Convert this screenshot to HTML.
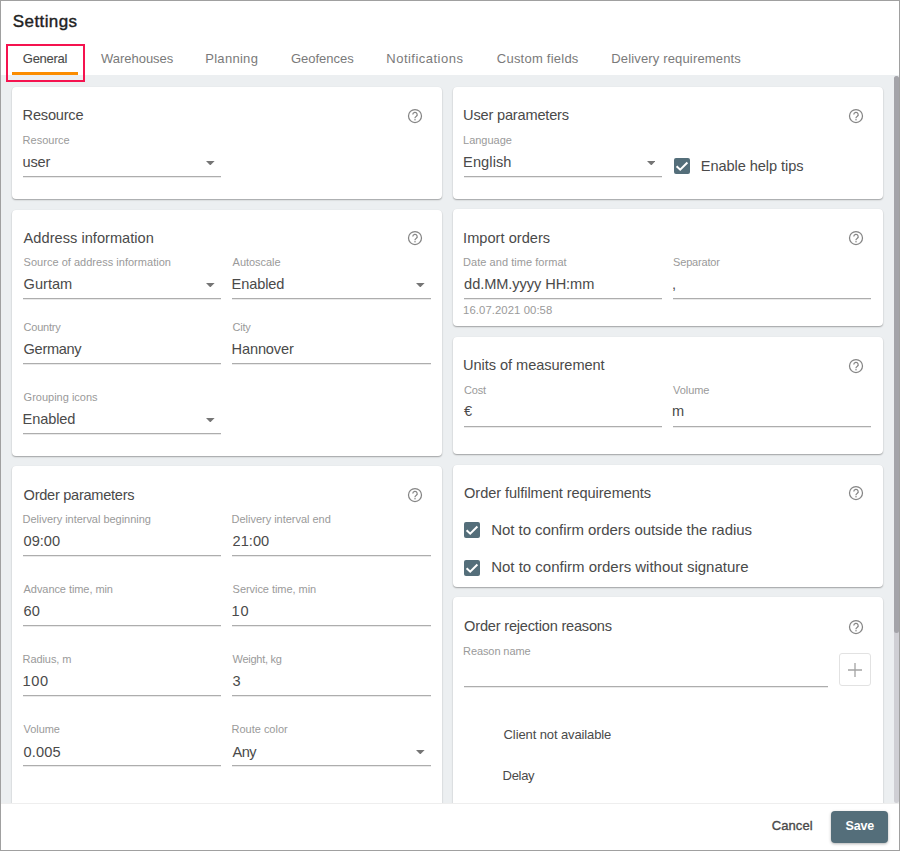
<!DOCTYPE html>
<html><head><meta charset="utf-8"><style>
html,body{margin:0;padding:0;}
body{width:900px;height:851px;position:relative;overflow:hidden;background:#fff;font-family:"Liberation Sans", sans-serif;}
.t{position:absolute;white-space:nowrap;}
#frame{position:absolute;left:0;top:0;width:900px;height:851px;box-sizing:border-box;border:1px solid #a0a0a0;pointer-events:none;z-index:10;}
</style></head><body>
<div class="t" style="left:12.8px;top:13.21px;font-size:17px;line-height:17px;color:#222222;font-weight:400;letter-spacing:0.400px;-webkit-text-stroke:0.4px #222222;">Settings</div>
<div class="t" style="left:22.8px;top:51.80px;font-size:13px;line-height:13px;color:#4a4a4a;font-weight:400;letter-spacing:-0.267px;-webkit-text-stroke:0.1px #4a4a4a;">General</div>
<div class="t" style="left:101.0px;top:51.80px;font-size:13px;line-height:13px;color:#7a7a7a;font-weight:400;letter-spacing:-0.022px;">Warehouses</div>
<div class="t" style="left:205.2px;top:51.80px;font-size:13px;line-height:13px;color:#7a7a7a;font-weight:400;letter-spacing:0.300px;">Planning</div>
<div class="t" style="left:290.9px;top:51.80px;font-size:13px;line-height:13px;color:#7a7a7a;font-weight:400;">Geofences</div>
<div class="t" style="left:386.3px;top:51.80px;font-size:13px;line-height:13px;color:#7a7a7a;font-weight:400;letter-spacing:0.483px;">Notifications</div>
<div class="t" style="left:496.8px;top:51.80px;font-size:13px;line-height:13px;color:#7a7a7a;font-weight:400;letter-spacing:0.233px;">Custom fields</div>
<div class="t" style="left:611.2px;top:51.80px;font-size:13px;line-height:13px;color:#7a7a7a;font-weight:400;letter-spacing:0.160px;">Delivery requirements</div>
<div style="position:absolute;left:1px;top:75px;width:898px;height:728px;background:#eceff1;"></div>
<div style="position:absolute;left:12px;top:72px;width:66px;height:3px;background:#fb8c00;"></div>
<div style="position:absolute;left:6px;top:44px;width:75px;height:34px;border:2px solid #f5134f;"></div>
<div style="position:absolute;left:894px;top:76px;width:5px;height:727px;background:#cfcfd4;border-radius:3px;"></div>
<div style="position:absolute;left:894px;top:76px;width:5px;height:557px;background:#a4a4a9;border-radius:3px;"></div>
<div style="position:absolute;left:12px;top:87px;width:430px;height:112px;background:#fff;border-radius:4px;box-shadow:0 1px 1.5px rgba(0,0,0,0.32),0 0 1px rgba(0,0,0,0.05);"></div>
<div class="t" style="left:22.6px;top:108.14px;font-size:14.6px;line-height:14.6px;color:#4a4a4a;font-weight:400;letter-spacing:-0.214px;">Resource</div>
<svg style="position:absolute;left:405.30px;top:106.25px" width="20" height="20" viewBox="0 0 20 20"><circle cx="10" cy="10" r="6.5" fill="none" stroke="#858585" stroke-width="1.25"/><path d="M7.8 8.6a2.2 2.2 0 1 1 3.3 1.9c-.7.4-1.1.8-1.1 1.6v.2" fill="none" stroke="#858585" stroke-width="1.25"/><circle cx="10" cy="13.7" r="0.75" fill="#858585"/></svg>
<div class="t" style="left:22.6px;top:134.89px;font-size:11px;line-height:11px;color:#9a9a9a;font-weight:400;">Resource</div>
<div class="t" style="left:22.6px;top:154.94px;font-size:14.6px;line-height:14.6px;color:#4a4a4a;font-weight:400;letter-spacing:-0.233px;">user</div>
<div style="position:absolute;left:23px;top:176px;width:198px;height:1px;background:#adadad;box-shadow:0 1px 0 #eaeaea;"></div>
<svg style="position:absolute;left:206px;top:161px" width="8.6" height="4.4" viewBox="0 0 10 5" preserveAspectRatio="none"><path fill="#757575" d="M0 0h10L5 5z"/></svg>
<div style="position:absolute;left:12px;top:210px;width:430px;height:246px;background:#fff;border-radius:4px;box-shadow:0 1px 1.5px rgba(0,0,0,0.32),0 0 1px rgba(0,0,0,0.05);"></div>
<div class="t" style="left:23.6px;top:231.14px;font-size:14.6px;line-height:14.6px;color:#4a4a4a;font-weight:400;letter-spacing:0.028px;">Address information</div>
<svg style="position:absolute;left:405.30px;top:228.35px" width="20" height="20" viewBox="0 0 20 20"><circle cx="10" cy="10" r="6.5" fill="none" stroke="#858585" stroke-width="1.25"/><path d="M7.8 8.6a2.2 2.2 0 1 1 3.3 1.9c-.7.4-1.1.8-1.1 1.6v.2" fill="none" stroke="#858585" stroke-width="1.25"/><circle cx="10" cy="13.7" r="0.75" fill="#858585"/></svg>
<div class="t" style="left:23.6px;top:257.29px;font-size:11px;line-height:11px;color:#9a9a9a;font-weight:400;letter-spacing:0.021px;">Source of address information</div>
<div class="t" style="left:23.6px;top:277.24px;font-size:14.6px;line-height:14.6px;color:#4a4a4a;font-weight:400;">Gurtam</div>
<div style="position:absolute;left:23px;top:298px;width:198px;height:1px;background:#adadad;box-shadow:0 1px 0 #eaeaea;"></div>
<svg style="position:absolute;left:206px;top:283px" width="8.6" height="4.4" viewBox="0 0 10 5" preserveAspectRatio="none"><path fill="#757575" d="M0 0h10L5 5z"/></svg>
<div class="t" style="left:232.6px;top:257.29px;font-size:11px;line-height:11px;color:#9a9a9a;font-weight:400;letter-spacing:-0.037px;">Autoscale</div>
<div class="t" style="left:231.6px;top:277.24px;font-size:14.6px;line-height:14.6px;color:#4a4a4a;font-weight:400;letter-spacing:-0.133px;">Enabled</div>
<div style="position:absolute;left:232px;top:298px;width:199px;height:1px;background:#adadad;box-shadow:0 1px 0 #eaeaea;"></div>
<svg style="position:absolute;left:416px;top:283px" width="8.6" height="4.4" viewBox="0 0 10 5" preserveAspectRatio="none"><path fill="#757575" d="M0 0h10L5 5z"/></svg>
<div class="t" style="left:23.6px;top:322.09px;font-size:11px;line-height:11px;color:#9a9a9a;font-weight:400;letter-spacing:-0.217px;">Country</div>
<div class="t" style="left:23.6px;top:341.94px;font-size:14.6px;line-height:14.6px;color:#4a4a4a;font-weight:400;letter-spacing:-0.333px;">Germany</div>
<div style="position:absolute;left:23px;top:363px;width:198px;height:1px;background:#adadad;box-shadow:0 1px 0 #eaeaea;"></div>
<div class="t" style="left:232.6px;top:322.09px;font-size:11px;line-height:11px;color:#9a9a9a;font-weight:400;letter-spacing:-0.267px;">City</div>
<div class="t" style="left:231.6px;top:341.94px;font-size:14.6px;line-height:14.6px;color:#4a4a4a;font-weight:400;letter-spacing:-0.157px;">Hannover</div>
<div style="position:absolute;left:232px;top:363px;width:199px;height:1px;background:#adadad;box-shadow:0 1px 0 #eaeaea;"></div>
<div class="t" style="left:23.6px;top:392.39px;font-size:11px;line-height:11px;color:#9a9a9a;font-weight:400;">Grouping icons</div>
<div class="t" style="left:22.6px;top:411.54px;font-size:14.6px;line-height:14.6px;color:#4a4a4a;font-weight:400;letter-spacing:-0.133px;">Enabled</div>
<div style="position:absolute;left:23px;top:433px;width:198px;height:1px;background:#adadad;box-shadow:0 1px 0 #eaeaea;"></div>
<svg style="position:absolute;left:206px;top:418px" width="8.6" height="4.4" viewBox="0 0 10 5" preserveAspectRatio="none"><path fill="#757575" d="M0 0h10L5 5z"/></svg>
<div style="position:absolute;left:12px;top:466px;width:430px;height:400px;background:#fff;border-radius:4px;box-shadow:0 1px 1.5px rgba(0,0,0,0.32),0 0 1px rgba(0,0,0,0.05);"></div>
<div class="t" style="left:23.6px;top:487.94px;font-size:14.6px;line-height:14.6px;color:#4a4a4a;font-weight:400;letter-spacing:-0.280px;">Order parameters</div>
<svg style="position:absolute;left:405.30px;top:485.35px" width="20" height="20" viewBox="0 0 20 20"><circle cx="10" cy="10" r="6.5" fill="none" stroke="#858585" stroke-width="1.25"/><path d="M7.8 8.6a2.2 2.2 0 1 1 3.3 1.9c-.7.4-1.1.8-1.1 1.6v.2" fill="none" stroke="#858585" stroke-width="1.25"/><circle cx="10" cy="13.7" r="0.75" fill="#858585"/></svg>
<div class="t" style="left:22.6px;top:514.09px;font-size:11px;line-height:11px;color:#9a9a9a;font-weight:400;letter-spacing:-0.027px;">Delivery interval beginning</div>
<div class="t" style="left:23.6px;top:533.64px;font-size:14.6px;line-height:14.6px;color:#4a4a4a;font-weight:400;letter-spacing:-0.025px;">09:00</div>
<div style="position:absolute;left:23px;top:555px;width:198px;height:1px;background:#adadad;box-shadow:0 1px 0 #eaeaea;"></div>
<div class="t" style="left:231.6px;top:514.09px;font-size:11px;line-height:11px;color:#9a9a9a;font-weight:400;letter-spacing:-0.025px;">Delivery interval end</div>
<div class="t" style="left:232.6px;top:533.64px;font-size:14.6px;line-height:14.6px;color:#4a4a4a;font-weight:400;">21:00</div>
<div style="position:absolute;left:232px;top:555px;width:199px;height:1px;background:#adadad;box-shadow:0 1px 0 #eaeaea;"></div>
<div class="t" style="left:23.6px;top:584.19px;font-size:11px;line-height:11px;color:#9a9a9a;font-weight:400;letter-spacing:-0.069px;">Advance time, min</div>
<div class="t" style="left:23.6px;top:604.14px;font-size:14.6px;line-height:14.6px;color:#4a4a4a;font-weight:400;">60</div>
<div style="position:absolute;left:23px;top:625px;width:198px;height:1px;background:#adadad;box-shadow:0 1px 0 #eaeaea;"></div>
<div class="t" style="left:232.6px;top:584.19px;font-size:11px;line-height:11px;color:#9a9a9a;font-weight:400;letter-spacing:-0.050px;">Service time, min</div>
<div class="t" style="left:231.6px;top:604.14px;font-size:14.6px;line-height:14.6px;color:#4a4a4a;font-weight:400;letter-spacing:0.700px;">10</div>
<div style="position:absolute;left:232px;top:625px;width:199px;height:1px;background:#adadad;box-shadow:0 1px 0 #eaeaea;"></div>
<div class="t" style="left:22.6px;top:654.49px;font-size:11px;line-height:11px;color:#9a9a9a;font-weight:400;letter-spacing:-0.088px;">Radius, m</div>
<div class="t" style="left:22.6px;top:674.44px;font-size:14.6px;line-height:14.6px;color:#4a4a4a;font-weight:400;letter-spacing:0.600px;">100</div>
<div style="position:absolute;left:23px;top:695px;width:198px;height:1px;background:#adadad;box-shadow:0 1px 0 #eaeaea;"></div>
<div class="t" style="left:232.6px;top:654.49px;font-size:11px;line-height:11px;color:#9a9a9a;font-weight:400;letter-spacing:-0.278px;">Weight, kg</div>
<div class="t" style="left:232.6px;top:674.44px;font-size:14.6px;line-height:14.6px;color:#4a4a4a;font-weight:400;">3</div>
<div style="position:absolute;left:232px;top:695px;width:199px;height:1px;background:#adadad;box-shadow:0 1px 0 #eaeaea;"></div>
<div class="t" style="left:23.6px;top:724.49px;font-size:11px;line-height:11px;color:#9a9a9a;font-weight:400;letter-spacing:-0.080px;">Volume</div>
<div class="t" style="left:23.6px;top:744.64px;font-size:14.6px;line-height:14.6px;color:#4a4a4a;font-weight:400;letter-spacing:0.150px;">0.005</div>
<div style="position:absolute;left:23px;top:765px;width:198px;height:1px;background:#adadad;box-shadow:0 1px 0 #eaeaea;"></div>
<div class="t" style="left:231.6px;top:724.49px;font-size:11px;line-height:11px;color:#9a9a9a;font-weight:400;letter-spacing:-0.020px;">Route color</div>
<div class="t" style="left:232.6px;top:744.64px;font-size:14.6px;line-height:14.6px;color:#4a4a4a;font-weight:400;letter-spacing:-0.600px;">Any</div>
<div style="position:absolute;left:232px;top:765px;width:199px;height:1px;background:#adadad;box-shadow:0 1px 0 #eaeaea;"></div>
<svg style="position:absolute;left:416px;top:750px" width="8.6" height="4.4" viewBox="0 0 10 5" preserveAspectRatio="none"><path fill="#757575" d="M0 0h10L5 5z"/></svg>
<div style="position:absolute;left:453px;top:87px;width:430px;height:112px;background:#fff;border-radius:4px;box-shadow:0 1px 1.5px rgba(0,0,0,0.32),0 0 1px rgba(0,0,0,0.05);"></div>
<div class="t" style="left:463.1px;top:108.34px;font-size:14.6px;line-height:14.6px;color:#4a4a4a;font-weight:400;letter-spacing:-0.193px;">User parameters</div>
<svg style="position:absolute;left:846.30px;top:106.25px" width="20" height="20" viewBox="0 0 20 20"><circle cx="10" cy="10" r="6.5" fill="none" stroke="#858585" stroke-width="1.25"/><path d="M7.8 8.6a2.2 2.2 0 1 1 3.3 1.9c-.7.4-1.1.8-1.1 1.6v.2" fill="none" stroke="#858585" stroke-width="1.25"/><circle cx="10" cy="13.7" r="0.75" fill="#858585"/></svg>
<div class="t" style="left:463.1px;top:134.89px;font-size:11px;line-height:11px;color:#9a9a9a;font-weight:400;letter-spacing:-0.029px;">Language</div>
<div class="t" style="left:463.1px;top:154.84px;font-size:14.6px;line-height:14.6px;color:#4a4a4a;font-weight:400;letter-spacing:0.083px;">English</div>
<div style="position:absolute;left:463.5px;top:176px;width:198px;height:1px;background:#adadad;box-shadow:0 1px 0 #eaeaea;"></div>
<svg style="position:absolute;left:646.5px;top:161px" width="8.6" height="4.4" viewBox="0 0 10 5" preserveAspectRatio="none"><path fill="#757575" d="M0 0h10L5 5z"/></svg>
<svg style="position:absolute;left:674px;top:158px" width="16" height="16" viewBox="0 0 16 16"><rect width="16" height="16" rx="2" fill="#546e7a"/><path d="M2.6 8.3l3.6 3.4 7.2-7.2" fill="none" stroke="#fff" stroke-width="2"/></svg>
<div class="t" style="left:700.8px;top:158.74px;font-size:14.6px;line-height:14.6px;color:#4a4a4a;font-weight:400;letter-spacing:-0.073px;">Enable help tips</div>
<div style="position:absolute;left:453px;top:209px;width:430px;height:117px;background:#fff;border-radius:4px;box-shadow:0 1px 1.5px rgba(0,0,0,0.32),0 0 1px rgba(0,0,0,0.05);"></div>
<div class="t" style="left:463.1px;top:230.64px;font-size:14.6px;line-height:14.6px;color:#4a4a4a;font-weight:400;letter-spacing:0.017px;">Import orders</div>
<svg style="position:absolute;left:846.30px;top:228.35px" width="20" height="20" viewBox="0 0 20 20"><circle cx="10" cy="10" r="6.5" fill="none" stroke="#858585" stroke-width="1.25"/><path d="M7.8 8.6a2.2 2.2 0 1 1 3.3 1.9c-.7.4-1.1.8-1.1 1.6v.2" fill="none" stroke="#858585" stroke-width="1.25"/><circle cx="10" cy="13.7" r="0.75" fill="#858585"/></svg>
<div class="t" style="left:463.1px;top:257.19px;font-size:11px;line-height:11px;color:#9a9a9a;font-weight:400;letter-spacing:0.042px;">Date and time format</div>
<div class="t" style="left:464.1px;top:277.44px;font-size:14.6px;line-height:14.6px;color:#4a4a4a;font-weight:400;letter-spacing:-0.073px;">dd.MM.yyyy HH:mm</div>
<div style="position:absolute;left:463.5px;top:298px;width:198px;height:1px;background:#adadad;box-shadow:0 1px 0 #eaeaea;"></div>
<div class="t" style="left:673.1px;top:257.19px;font-size:11px;line-height:11px;color:#9a9a9a;font-weight:400;letter-spacing:-0.188px;">Separator</div>
<div class="t" style="left:672.1px;top:277.44px;font-size:14.6px;line-height:14.6px;color:#4a4a4a;font-weight:400;">,</div>
<div style="position:absolute;left:672.5px;top:298px;width:198px;height:1px;background:#adadad;box-shadow:0 1px 0 #eaeaea;"></div>
<div class="t" style="left:463.1px;top:305.13px;font-size:11.3px;line-height:11.3px;color:#9a9a9a;font-weight:400;letter-spacing:0.080px;">16.07.2021 00:58</div>
<div style="position:absolute;left:453px;top:337px;width:430px;height:117px;background:#fff;border-radius:4px;box-shadow:0 1px 1.5px rgba(0,0,0,0.32),0 0 1px rgba(0,0,0,0.05);"></div>
<div class="t" style="left:463.1px;top:357.64px;font-size:14.6px;line-height:14.6px;color:#4a4a4a;font-weight:400;letter-spacing:-0.063px;">Units of measurement</div>
<svg style="position:absolute;left:846.30px;top:355.85px" width="20" height="20" viewBox="0 0 20 20"><circle cx="10" cy="10" r="6.5" fill="none" stroke="#858585" stroke-width="1.25"/><path d="M7.8 8.6a2.2 2.2 0 1 1 3.3 1.9c-.7.4-1.1.8-1.1 1.6v.2" fill="none" stroke="#858585" stroke-width="1.25"/><circle cx="10" cy="13.7" r="0.75" fill="#858585"/></svg>
<div class="t" style="left:464.1px;top:384.69px;font-size:11px;line-height:11px;color:#9a9a9a;font-weight:400;letter-spacing:-0.200px;">Cost</div>
<div class="t" style="left:464.1px;top:403.64px;font-size:14.6px;line-height:14.6px;color:#4a4a4a;font-weight:400;">€</div>
<div style="position:absolute;left:463.5px;top:426px;width:198px;height:1px;background:#adadad;box-shadow:0 1px 0 #eaeaea;"></div>
<div class="t" style="left:673.1px;top:384.69px;font-size:11px;line-height:11px;color:#9a9a9a;font-weight:400;letter-spacing:-0.080px;">Volume</div>
<div class="t" style="left:672.1px;top:403.64px;font-size:14.6px;line-height:14.6px;color:#4a4a4a;font-weight:400;">m</div>
<div style="position:absolute;left:672.5px;top:426px;width:198px;height:1px;background:#adadad;box-shadow:0 1px 0 #eaeaea;"></div>
<div style="position:absolute;left:453px;top:465px;width:430px;height:122px;background:#fff;border-radius:4px;box-shadow:0 1px 1.5px rgba(0,0,0,0.32),0 0 1px rgba(0,0,0,0.05);"></div>
<div class="t" style="left:464.1px;top:485.64px;font-size:14.6px;line-height:14.6px;color:#4a4a4a;font-weight:400;letter-spacing:-0.071px;">Order fulfilment requirements</div>
<svg style="position:absolute;left:846.30px;top:483.35px" width="20" height="20" viewBox="0 0 20 20"><circle cx="10" cy="10" r="6.5" fill="none" stroke="#858585" stroke-width="1.25"/><path d="M7.8 8.6a2.2 2.2 0 1 1 3.3 1.9c-.7.4-1.1.8-1.1 1.6v.2" fill="none" stroke="#858585" stroke-width="1.25"/><circle cx="10" cy="13.7" r="0.75" fill="#858585"/></svg>
<svg style="position:absolute;left:464.3px;top:522px" width="16" height="16" viewBox="0 0 16 16"><rect width="16" height="16" rx="2" fill="#546e7a"/><path d="M2.6 8.3l3.6 3.4 7.2-7.2" fill="none" stroke="#fff" stroke-width="2"/></svg>
<div class="t" style="left:491.2px;top:521.50px;font-size:15px;line-height:15px;color:#4a4a4a;font-weight:400;letter-spacing:-0.046px;">Not to confirm orders outside the radius</div>
<svg style="position:absolute;left:464.3px;top:560px" width="16" height="16" viewBox="0 0 16 16"><rect width="16" height="16" rx="2" fill="#546e7a"/><path d="M2.6 8.3l3.6 3.4 7.2-7.2" fill="none" stroke="#fff" stroke-width="2"/></svg>
<div class="t" style="left:491.2px;top:559.10px;font-size:15px;line-height:15px;color:#4a4a4a;font-weight:400;letter-spacing:-0.005px;">Not to confirm orders without signature</div>
<div style="position:absolute;left:453px;top:597px;width:430px;height:300px;background:#fff;border-radius:4px;box-shadow:0 1px 1.5px rgba(0,0,0,0.32),0 0 1px rgba(0,0,0,0.05);"></div>
<div class="t" style="left:464.1px;top:618.54px;font-size:14.6px;line-height:14.6px;color:#4a4a4a;font-weight:400;letter-spacing:-0.205px;">Order rejection reasons</div>
<svg style="position:absolute;left:846.30px;top:616.85px" width="20" height="20" viewBox="0 0 20 20"><circle cx="10" cy="10" r="6.5" fill="none" stroke="#858585" stroke-width="1.25"/><path d="M7.8 8.6a2.2 2.2 0 1 1 3.3 1.9c-.7.4-1.1.8-1.1 1.6v.2" fill="none" stroke="#858585" stroke-width="1.25"/><circle cx="10" cy="13.7" r="0.75" fill="#858585"/></svg>
<div class="t" style="left:463.1px;top:645.59px;font-size:11px;line-height:11px;color:#9a9a9a;font-weight:400;letter-spacing:-0.100px;">Reason name</div>
<div style="position:absolute;left:463.5px;top:686px;width:364px;height:1px;background:#adadad;box-shadow:0 1px 0 #eaeaea;"></div>
<div style="position:absolute;left:839px;top:653px;width:32px;height:33px;box-sizing:border-box;border:1px solid #e2e2e2;border-radius:3px;background:#fff;"></div>
<svg style="position:absolute;left:848.2px;top:662.5px" width="14" height="14" viewBox="0 0 14 14"><path d="M7 0v14M0 7h14" stroke="#a4a4a4" stroke-width="1.3" fill="none"/></svg>
<div class="t" style="left:503.6px;top:728.00px;font-size:13px;line-height:13px;color:#4a4a4a;font-weight:400;letter-spacing:-0.111px;">Client not available</div>
<div class="t" style="left:502.6px;top:769.40px;font-size:13px;line-height:13px;color:#4a4a4a;font-weight:400;letter-spacing:-0.325px;">Delay</div>
<div style="position:absolute;left:1px;top:803px;width:898px;height:47px;background:#fff;border-top:1px solid #eeeeee;"></div>
<div class="t" style="left:771.7px;top:819.00px;font-size:13px;line-height:13px;color:#4a4a4a;font-weight:400;letter-spacing:0.100px;-webkit-text-stroke:0.35px #4a4a4a;">Cancel</div>
<div style="position:absolute;left:831px;top:811px;width:57px;height:32px;background:#546e7a;border-radius:4px;box-shadow:0 1px 3px rgba(0,0,0,0.3);"></div>
<div class="t" style="left:845.5px;top:820.12px;font-size:12.5px;line-height:12.5px;color:#fff;font-weight:700;letter-spacing:-0.200px;">Save</div>
<div id="frame"></div>
</body></html>
